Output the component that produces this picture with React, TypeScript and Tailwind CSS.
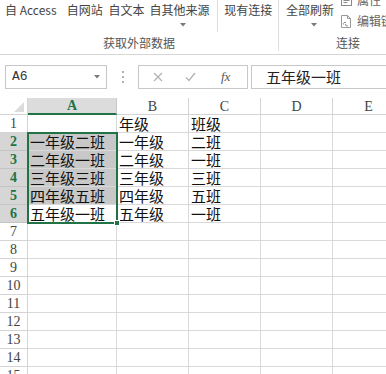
import React from 'react';

const cols = ['A', 'B', 'C', 'D', 'E'];

const data: Record<number, string[]> = {
  1: ['', '年级', '班级'],
  2: ['一年级二班', '一年级', '二班'],
  3: ['二年级一班', '二年级', '一班'],
  4: ['三年级三班', '三年级', '三班'],
  5: ['四年级五班', '四年级', '五班'],
  6: ['五年级一班', '五年级', '一班'],
};

const rows = Array.from({ length: 15 }, (_, i) => i + 1);

function Caret({ className = '' }: { className?: string }) {
  return (
    <svg width="6" height="4" viewBox="0 0 6 4" className={className}>
      <path d="M0 0 L6 0 L3 3.5 Z" fill="#7a7a7a" />
    </svg>
  );
}

function Ribbon() {
  return (
    <div className="h-[55px] border-b border-[#d6d6d6] flex overflow-hidden text-[12px] text-[#444] font-['Noto_Sans_CJK_SC',sans-serif]">
      {/* 获取外部数据 */}
      <div className="w-[279px] shrink-0 h-[51px] border-r border-[#dedede] flex flex-col">
        <div className="h-[35px] flex">
          <div className="w-[62px] pl-[5px] pt-[2px] leading-[16px] whitespace-nowrap">自 Access</div>
          <div className="w-[42px] pl-[5px] pt-[2px] leading-[16px] whitespace-nowrap">自网站</div>
          <div className="w-[41px] pl-[5px] pt-[2px] leading-[16px] whitespace-nowrap">自文本</div>
          <div className="w-[73px] pl-[5px] pt-[2px] leading-[16px] whitespace-nowrap flex flex-col">
            <span>自其他来源</span>
            <Caret className="mt-[5px] ml-[30px]" />
          </div>
          <div className="w-[61px] h-[32px] border-l border-[#dedede] pl-[6px] pt-[2px] leading-[16px] whitespace-nowrap">现有连接</div>
        </div>
        <div className="h-[16px] leading-[16px] text-center text-[#555]">获取外部数据</div>
      </div>

      {/* 连接 */}
      <div className="w-[138px] shrink-0 h-[51px] flex flex-col">
        <div className="h-[35px] flex">
          <div className="w-[62px] pl-[7px] pt-[2px] leading-[16px] whitespace-nowrap flex flex-col">
            <span>全部刷新</span>
            <Caret className="mt-[5px] ml-[25px]" />
          </div>
          <div className="flex flex-col -mt-[9px]">
            <div className="h-[18px] flex items-center gap-[5px] whitespace-nowrap text-[#666]">
              <svg width="11" height="11" viewBox="0 0 11 11">
                <rect x="0.5" y="0.5" width="10" height="10" fill="none" stroke="#8a8a8a" />
                <path d="M2.5 3.5 H8.5 M2.5 5.5 H8.5 M2.5 7.5 H6.5" stroke="#8a8a8a" />
              </svg>
              <span className="leading-[16px]">属性</span>
            </div>
            <div className="h-[18px] mt-[3px] flex items-center gap-[5px] whitespace-nowrap text-[#666]">
              <svg width="11" height="13" viewBox="0 0 11 13">
                <path d="M0.5 0.5 H6.5 L9.5 3.5 V12.5 H0.5 Z" fill="#fff" stroke="#9a9a9a" />
                <path d="M6.5 0.5 V3.5 H9.5" fill="none" stroke="#9a9a9a" />
                <path d="M2.5 9.5 a1.6 1.6 0 0 1 2.5 -1.8 M4.5 9 a1.6 1.6 0 0 0 2.6 1.6" fill="none" stroke="#8a8a8a" />
              </svg>
              <span className="leading-[16px]">编辑链接</span>
            </div>
          </div>
        </div>
        <div className="h-[16px] leading-[16px] text-center text-[#555]">连接</div>
      </div>
    </div>
  );
}

function FormulaBar() {
  return (
    <div className="h-[43px] flex items-start pt-[10px]">
      <div className="ml-[5px] w-[102px] h-[24px] border border-[#c8c8c8] flex items-center justify-between pl-[6px] pr-[6px]">
        <span className="text-[13px] text-[#333] font-['Liberation_Mono',monospace]">A6</span>
        <Caret />
      </div>
      <div className="w-[31px] h-[24px] flex flex-col items-center justify-center gap-[3px]">
        <span className="w-[2px] h-[2px] bg-[#b0b0b0]" />
        <span className="w-[2px] h-[2px] bg-[#b0b0b0]" />
        <span className="w-[2px] h-[2px] bg-[#b0b0b0]" />
      </div>
      <div className="w-[110px] h-[24px] border border-[#c8c8c8] flex items-center">
        <svg width="10" height="10" viewBox="0 0 10 10" className="ml-[14px]">
          <path d="M1 1 L9 9 M9 1 L1 9" stroke="#b4b4b4" strokeWidth="1.3" />
        </svg>
        <svg width="11" height="10" viewBox="0 0 11 10" className="ml-[22px]">
          <path d="M1 5.5 L4 8.5 L10 1" fill="none" stroke="#b4b4b4" strokeWidth="1.4" />
        </svg>
        <span className="ml-[25px] italic text-[13px] text-[#555] font-['Liberation_Serif',serif]">fx</span>
      </div>
      <div className="ml-[3px] flex-1 h-[24px] border border-[#c8c8c8] border-r-0 flex items-center pl-[14px] text-[15px] text-[#222] font-['Noto_Sans_CJK_SC',sans-serif]">
        五年级一班
      </div>
    </div>
  );
}

function Sheet() {
  const isSelRow = (r: number) => r >= 2 && r <= 6;
  return (
    <div className="relative grid grid-cols-[28px_89px_72px_72px_72px_72px_72px] grid-rows-[17px_repeat(15,18px)]">
      {/* corner */}
      <div className="border-r border-b border-[#d4d4d4] flex items-end justify-end pr-[3px] pb-[2px]">
        <svg width="10" height="10" viewBox="0 0 10 10">
          <path d="M10 0 L10 10 L0 10 Z" fill="#dcdcdc" />
        </svg>
      </div>
      {cols.map((c, i) =>
        i === 0 ? (
          <div
            key={c}
            className="bg-[#dcdcdc] border-r border-[#c8c8c8] border-b-2 border-b-[#217346] flex items-center justify-center text-[14px] font-bold text-[#217346] font-['Liberation_Serif',serif]"
          >
            {c}
          </div>
        ) : (
          <div
            key={c}
            className="border-r border-b border-[#d4d4d4] flex items-center justify-center text-[14px] text-[#444] font-['Liberation_Serif',serif]"
          >
            {c}
          </div>
        )
      )}
      <div className="border-b border-[#d4d4d4]" />

      {rows.map((r) => (
        <React.Fragment key={r}>
          <div
            className={
              isSelRow(r)
                ? "bg-[#d6d6d6] border-r border-b border-[#c4c4c4] flex items-center justify-center text-[14px] font-bold text-[#217346] font-['Liberation_Serif',serif]"
                : "border-r border-b border-[#d4d4d4] flex items-center justify-center text-[14px] text-[#444] font-['Liberation_Serif',serif]"
            }
          >
            {r}
          </div>
          {[0, 1, 2, 3, 4, 5].map((ci) => {
            const text = data[r]?.[ci] ?? '';
            const grey = ci === 0 && r >= 2 && r <= 5;
            return (
              <div
                key={ci}
                className={`border-r border-b border-[#d9d9d9] flex items-end pl-[2px] overflow-visible whitespace-nowrap text-[15px] leading-[17px] text-[#111] font-['Noto_Sans_CJK_SC',sans-serif] ${
                  grey ? 'bg-[#c8c8c8]' : 'bg-white'
                }`}
              >
                {text}
              </div>
            );
          })}
        </React.Fragment>
      ))}

      {/* selection A2:A6 */}
      <div className="absolute left-[27px] top-[34px] w-[91px] h-[92px] border-2 border-[#217346] pointer-events-none" />
      <div className="absolute left-[114px] top-[122px] w-[6px] h-[6px] bg-[#217346] border border-white" />
    </div>
  );
}

export default function App() {
  return (
    <div className="w-[386px] h-[374px] overflow-hidden bg-white">
      <Ribbon />
      <FormulaBar />
      <Sheet />
    </div>
  );
}
